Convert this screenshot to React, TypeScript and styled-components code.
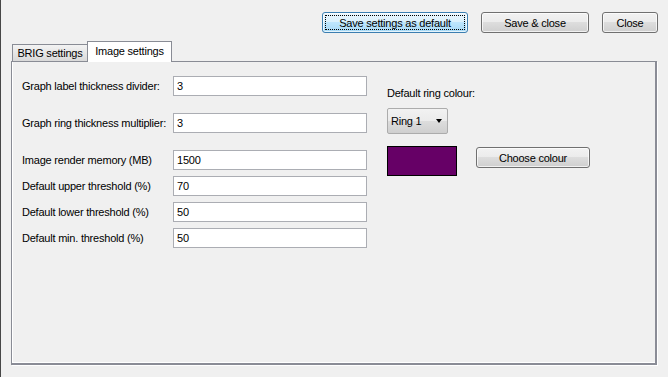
import React from "react";
import styled, { createGlobalStyle, css } from "styled-components";

const GlobalStyle = createGlobalStyle`
  html, body {
    margin: 0;
    padding: 0;
    background: #f0f0f0;
  }
  body {
    font-family: "Liberation Sans", Arial, sans-serif;
    font-size: 11px;
    letter-spacing: -0.22px;
    color: #000;
  }
  * { box-sizing: border-box; }
`;

const Window = styled.div`
  width: 668px;
  height: 377px;
  border-left: 1px solid #474747;
  background: #f0f0f0;
  display: flex;
  flex-direction: column;
  overflow: hidden;
`;

const TopBar = styled.div`
  display: flex;
  justify-content: flex-end;
  gap: 13px;
  padding: 12px 10px 0 0;
`;

const Button = styled.button<{ $width: number; $primary?: boolean }>`
  position: relative;
  width: ${(p) => p.$width}px;
  height: 21px;
  padding: 0;
  margin: 0;
  font-family: "Liberation Sans", Arial, sans-serif;
  font-size: 11px;
  letter-spacing: -0.22px;
  color: #000;
  border: 1px solid #707070;
  border-radius: 3px;
  background: linear-gradient(#f2f2f2 0%, #ebebeb 50%, #dddddd 50%, #cfcfcf 100%);
  box-shadow: inset 0 0 0 1px rgba(255, 255, 255, 0.7);
  ${(p) =>
    p.$primary &&
    css`
      border-color: #3c7fb1;
      background: linear-gradient(#eaf6fd 0%, #d9f0fc 50%, #bee6fd 50%, #a7d9f5 100%);
      &::after {
        content: "";
        position: absolute;
        inset: 2px;
        border: 1px dotted #000;
      }
    `}
`;

const TabStrip = styled.div`
  display: flex;
  align-items: flex-end;
  height: 20px;
  margin: 8px 0 0 10px;
  position: relative;
  z-index: 1;
`;

const Tab = styled.div<{ $active?: boolean; $width: number }>`
  width: ${(p) => p.$width}px;
  display: flex;
  align-items: center;
  justify-content: center;
  border: 1px solid #898c95;
  border-bottom: none;
  ${(p) =>
    p.$active
      ? css`
          height: 21px;
          margin-bottom: -1px;
          background: #fff;
          padding-bottom: 3px;
        `
      : css`
          height: 17px;
          margin-left: 1px;
          border-right: none;
          background: linear-gradient(#f3f3f3, #e6e6e6 50%, #d9d9d9 100%);
        `}
`;

const Panel = styled.div`
  margin-left: 10px;
  width: 646px;
  height: 304px;
  border-top: 1px solid #898c95;
  border-left: 1px solid #898c95;
  border-right: 2px solid #8a8c96;
  border-bottom: 2px solid #8a8c96;
  box-shadow: 1px 1px 0 #fff, inset 1px 0 0 #fff, inset 0 -1px 0 #fff;
  padding: 14px 0 0 10px;
  display: flex;
  gap: 20px;
`;

const LeftColumn = styled.div`
  width: 345px;
  flex-shrink: 0;
  display: flex;
  flex-direction: column;
`;

const FieldRow = styled.div<{ $gap: number }>`
  display: flex;
  align-items: center;
  height: 20px;
  margin-top: ${(p) => p.$gap}px;
`;

const Label = styled.span`
  width: 151px;
  flex-shrink: 0;
  white-space: nowrap;
`;

const TextField = styled.div`
  width: 194px;
  height: 20px;
  flex-shrink: 0;
  border: 1px solid #abadb3;
  background: #fff;
  padding-left: 3px;
  display: flex;
  align-items: center;
`;

const RightColumn = styled.div`
  display: flex;
  flex-direction: column;
  padding-top: 11px;
`;

const SectionLabel = styled.div`
  line-height: 13px;
  white-space: nowrap;
`;

const Combo = styled.div`
  margin-top: 8px;
  width: 61px;
  height: 26px;
  border: 1px solid #acacac;
  border-radius: 2px;
  background: linear-gradient(#f2f2f2 0%, #ebebeb 50%, #dddddd 50%, #cfcfcf 100%);
  display: flex;
  align-items: center;
  justify-content: space-between;
  padding: 0 5px 0 3px;
`;

const Arrow = styled.span`
  width: 0;
  height: 0;
  border-left: 3.5px solid transparent;
  border-right: 3.5px solid transparent;
  border-top: 4px solid #000;
`;

const ColourRow = styled.div`
  display: flex;
  align-items: flex-start;
  gap: 19px;
  margin-top: 12px;
`;

const Swatch = styled.div<{ $colour: string }>`
  width: 70px;
  height: 30px;
  border: 1px solid #000;
  background: ${(p) => p.$colour};
`;

const ChooseButton = styled(Button)`
  margin-top: 1px;
`;

const fields = [
  { label: "Graph label thickness divider:", value: "3", gap: 0 },
  { label: "Graph ring thickness multiplier:", value: "3", gap: 17 },
  { label: "Image render memory (MB)", value: "1500", gap: 17 },
  { label: "Default upper threshold (%)", value: "70", gap: 6 },
  { label: "Default lower threshold (%)", value: "50", gap: 6 },
  { label: "Default min. threshold (%)", value: "50", gap: 6 },
];

export default function App() {
  return (
    <>
      <GlobalStyle />
      <Window>
        <TopBar>
          <Button $width={146} $primary>Save settings as default</Button>
          <Button $width={108}>Save &amp; close</Button>
          <Button $width={56}>Close</Button>
        </TopBar>
        <TabStrip>
          <Tab $width={75}>BRIG settings</Tab>
          <Tab $width={85} $active>Image settings</Tab>
        </TabStrip>
        <Panel>
          <LeftColumn>
            {fields.map((f) => (
              <FieldRow key={f.label} $gap={f.gap}>
                <Label>{f.label}</Label>
                <TextField>{f.value}</TextField>
              </FieldRow>
            ))}
          </LeftColumn>
          <RightColumn>
            <SectionLabel>Default ring colour:</SectionLabel>
            <Combo>
              <span>Ring 1</span>
              <Arrow />
            </Combo>
            <ColourRow>
              <Swatch $colour="#660066" />
              <ChooseButton $width={114}>Choose colour</ChooseButton>
            </ColourRow>
          </RightColumn>
        </Panel>
      </Window>
    </>
  );
}
